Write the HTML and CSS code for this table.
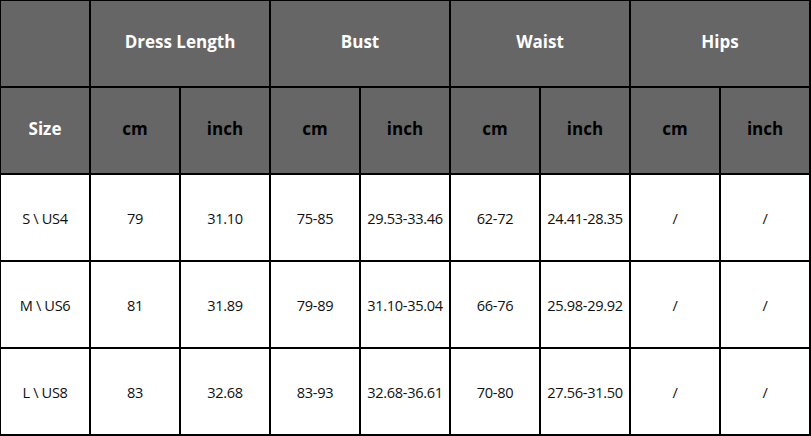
FILE: index.html
```html
<!DOCTYPE html>
<html>
<head>
<meta charset="utf-8">
<link rel="stylesheet" href="styles.css">
</head>
<body>
<table class="size-table">
  <colgroup>
    <col class="c"><col class="c"><col class="c"><col class="c"><col class="c">
    <col class="c"><col class="c"><col class="c"><col class="c">
  </colgroup>
  <tr class="head">
    <td class="light"></td>
    <td class="light" colspan="2">Dress Length</td>
    <td class="light" colspan="2">Bust</td>
    <td class="light" colspan="2">Waist</td>
    <td class="light" colspan="2">Hips</td>
  </tr>
  <tr class="head">
    <td class="light">Size</td>
    <td>cm</td><td>inch</td>
    <td>cm</td><td>inch</td>
    <td>cm</td><td>inch</td>
    <td>cm</td><td>inch</td>
  </tr>
  <tr class="data">
    <td>S \ US4</td><td>79</td><td>31.10</td><td>75-85</td><td>29.53-33.46</td><td>62-72</td><td>24.41-28.35</td><td>/</td><td>/</td>
  </tr>
  <tr class="data">
    <td>M \ US6</td><td>81</td><td>31.89</td><td>79-89</td><td>31.10-35.04</td><td>66-76</td><td>25.98-29.92</td><td>/</td><td>/</td>
  </tr>
  <tr class="data">
    <td>L \ US8</td><td>83</td><td>32.68</td><td>83-93</td><td>32.68-36.61</td><td>70-80</td><td>27.56-31.50</td><td>/</td><td>/</td>
  </tr>
</table>
</body>
</html>
```
FILE: styles.css
```css
html, body {
  margin: 0;
  padding: 0;
  background: #ffffff;
  overflow: hidden;
}
.size-table {
  width: 811px;
  height: 436px;
  border-collapse: separate;
  border-spacing: 0;
  table-layout: fixed;
  border-top: 1px solid #000;
  border-left: 1px solid #000;
  box-sizing: border-box;
}
.c { width: 90px; }
.size-table td {
  border-right: 2px solid #000;
  border-bottom: 2px solid #000;
  height: 87px;
  padding: 0;
  text-align: center;
  vertical-align: middle;
  box-sizing: border-box;
}
.head td {
  background: #666666;
  color: #000;
  font-family: "Open Sans", "Liberation Sans", sans-serif;
  font-weight: 700;
  font-size: 17px;
  padding-bottom: 4px;
}
.head td.light {
  color: #ffffff;
}
.data td {
  background: #ffffff;
  color: #111;
  font-family: "Open Sans", "Liberation Sans", sans-serif;
  font-size: 14.6px;
  letter-spacing: -0.35px;
}
```
